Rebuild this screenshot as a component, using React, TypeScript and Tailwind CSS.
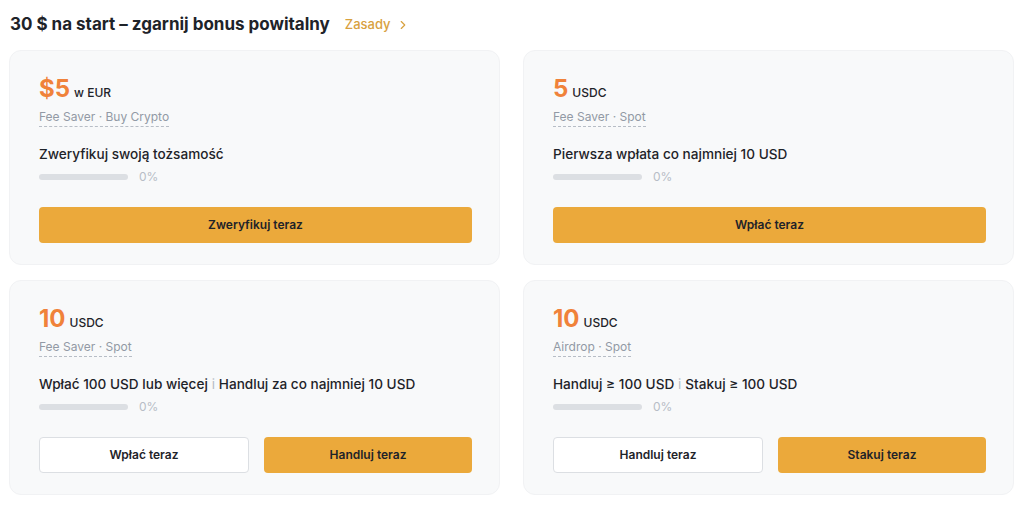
import { ChevronRight } from 'lucide-react';

interface Task {
  amount: string;
  unit: string;
  tag: string;
  task: string;
  buttons: { label: string; primary: boolean }[];
}

const tasks: Task[] = [
  {
    amount: '$5',
    unit: 'w EUR',
    tag: 'Fee Saver · Buy Crypto',
    task: 'Zweryfikuj swoją tożsamość',
    buttons: [{ label: 'Zweryfikuj teraz', primary: true }],
  },
  {
    amount: '5',
    unit: 'USDC',
    tag: 'Fee Saver · Spot',
    task: 'Pierwsza wpłata co najmniej 10 USD',
    buttons: [{ label: 'Wpłać teraz', primary: true }],
  },
  {
    amount: '10',
    unit: 'USDC',
    tag: 'Fee Saver · Spot',
    task: 'Wpłać 100 USD lub więcej|Handluj za co najmniej 10 USD',
    buttons: [
      { label: 'Wpłać teraz', primary: false },
      { label: 'Handluj teraz', primary: true },
    ],
  },
  {
    amount: '10',
    unit: 'USDC',
    tag: 'Airdrop · Spot',
    task: 'Handluj ≥ 100 USD|Stakuj ≥ 100 USD',
    buttons: [
      { label: 'Handluj teraz', primary: false },
      { label: 'Stakuj teraz', primary: true },
    ],
  },
];

function TaskText({ text }: { text: string }) {
  const parts = text.split('|');
  return (
    <p className="mt-[17px] text-[13.6px] leading-[20px] font-medium text-[#1e2329]">
      {parts.map((p, i) => (
        <span key={i}>
          {i > 0 && <span className="text-[#b7bdc6] font-normal"> i </span>}
          {p}
        </span>
      ))}
    </p>
  );
}

function TaskCard({ t }: { t: Task }) {
  return (
    <div className="rounded-[12px] bg-[#f8f9fa] border border-[#f1f2f4] pl-[29px] pr-[27px] pt-[23px] pb-[21px] h-[215px] flex flex-col">
      <div className="flex items-baseline h-[30px]">
        <span className="text-[24px] leading-[30px] font-bold text-[#f0823a]">{t.amount}</span>
        <span className="ml-[4px] text-[12px] font-medium text-[#1e2329]">{t.unit}</span>
      </div>
      <div className="mt-[4px] flex">
        <span className="text-[12px] leading-[18px] text-[#929aa5] border-b border-dashed border-[#b7bdc6]">
          {t.tag}
        </span>
      </div>
      <TaskText text={t.task} />
      <div className="mt-[5px] flex items-center h-[16px]">
        <div className="w-[89px] h-[6px] rounded-full bg-[#dcdfe3]" />
        <span className="ml-[11px] text-[12px] text-[#b7bdc6]">0%</span>
      </div>
      <div className="mt-auto flex gap-[15px]">
        {t.buttons.map((b) => (
          <button
            key={b.label}
            className={
              b.primary
                ? 'flex-1 h-[36px] rounded-[4px] bg-[#eba93b] text-[12px] font-semibold text-[#1e2329]'
                : 'flex-1 h-[36px] rounded-[4px] bg-white border border-[#dcdfe3] text-[12px] font-semibold text-[#1e2329]'
            }
          >
            {b.label}
          </button>
        ))}
      </div>
    </div>
  );
}

export default function App() {
  return (
    <div className="w-[1024px] h-[506px] bg-white pl-[9px] pr-[10px] pt-[12px]" style={{ fontFamily: 'Inter, "Noto Sans", sans-serif' }}>
      {/* Header */}
      <div className="flex items-center h-[26px] pl-[1px]">
        <h1 className="text-[17px] font-bold text-[#1e2329]">30 $ na start – zgarnij bonus powitalny</h1>
        <a className="ml-[15px] flex items-center text-[13px] font-medium text-[#d8a13f]">
          Zasady
          <ChevronRight size={14} strokeWidth={2} className="ml-[5px]" />
        </a>
      </div>

      {/* Cards */}
      <div className="mt-[12px] grid grid-cols-2 gap-x-[23px] gap-y-[15px]">
        {tasks.map((t, i) => (
          <TaskCard key={i} t={t} />
        ))}
      </div>
    </div>
  );
}
